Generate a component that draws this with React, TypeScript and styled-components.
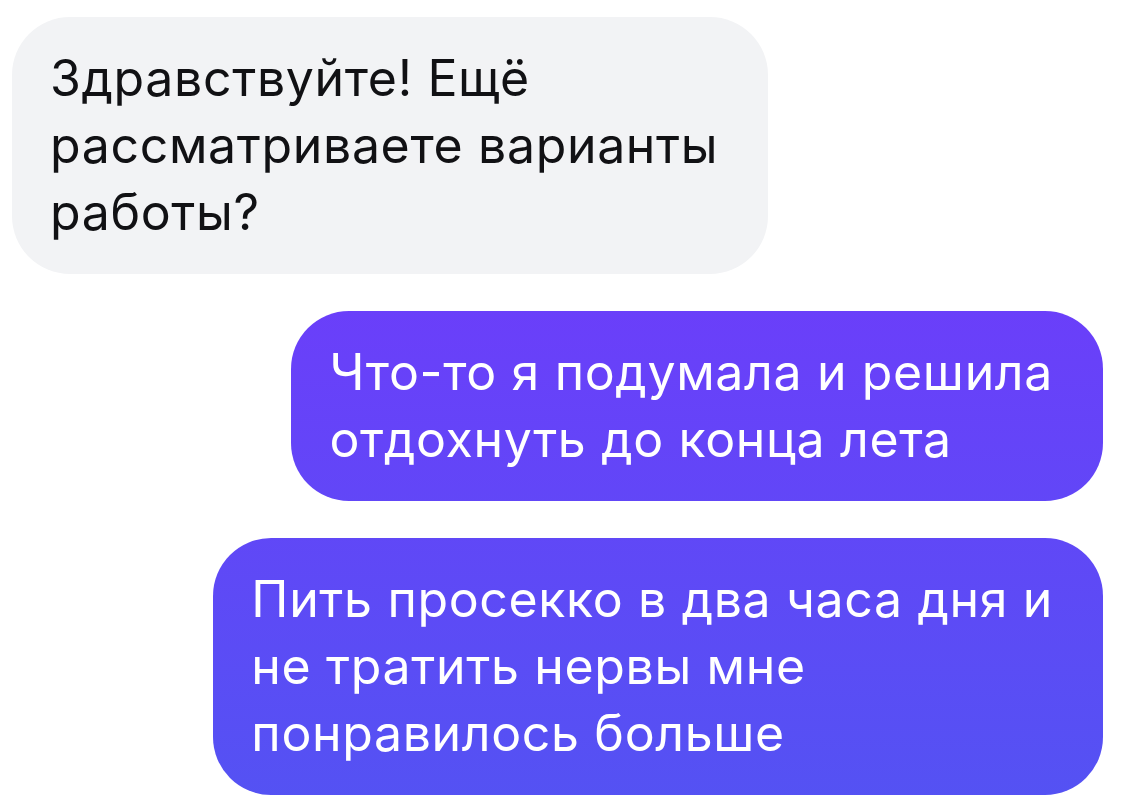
import React from 'react';
import styled, { createGlobalStyle } from 'styled-components';

const GlobalStyle = createGlobalStyle`
  html, body {
    margin: 0;
    padding: 0;
    background: #ffffff;
  }
  body {
    font-family: Inter, "Noto Sans", "DejaVu Sans", sans-serif;
    -webkit-font-smoothing: antialiased;
  }
`;

const Chat = styled.div`
  width: 1128px;
  height: 802px;
  box-sizing: border-box;
  padding: 17px 25px 0 12px;
  display: flex;
  flex-direction: column;
  gap: 37px;
  overflow: hidden;
`;

const Bubble = styled.div<{ $outgoing?: boolean }>`
  align-self: ${props => props.$outgoing ? 'flex-end' : 'flex-start'};
  box-sizing: border-box;
  padding: 28px 50px 28px 38px;
  border-radius: 58px;
  font-size: 50px;
  line-height: 67px;
  letter-spacing: 0.65px;
  font-weight: 400;
  white-space: nowrap;
  color: ${props => props.$outgoing ? '#ffffff' : '#111114'};
  background: ${props => props.$outgoing
    ? 'linear-gradient(180deg, #7833fe 0px, #5452f3 802px)'
    : '#f2f3f5'};
  background-attachment: ${props => props.$outgoing ? 'fixed' : 'scroll'};
`;

const messages = [
  { out: false, lines: ['Здравствуйте! Ещё', 'рассматриваете варианты', 'работы?'] },
  { out: true, lines: ['Что-то я подумала и решила', 'отдохнуть до конца лета'] },
  { out: true, lines: ['Пить просекко в два часа дня и', 'не тратить нервы мне', 'понравилось больше'] },
];

const App: React.FC = () => {
  return (
    <>
      <GlobalStyle />
      <Chat>
        {messages.map((m, i) => (
          <Bubble key={i} $outgoing={m.out}>
            {m.lines.map((line, j) => (
              <React.Fragment key={j}>
                {line}
                {j < m.lines.length - 1 && <br />}
              </React.Fragment>
            ))}
          </Bubble>
        ))}
      </Chat>
    </>
  );
};

export default App;
